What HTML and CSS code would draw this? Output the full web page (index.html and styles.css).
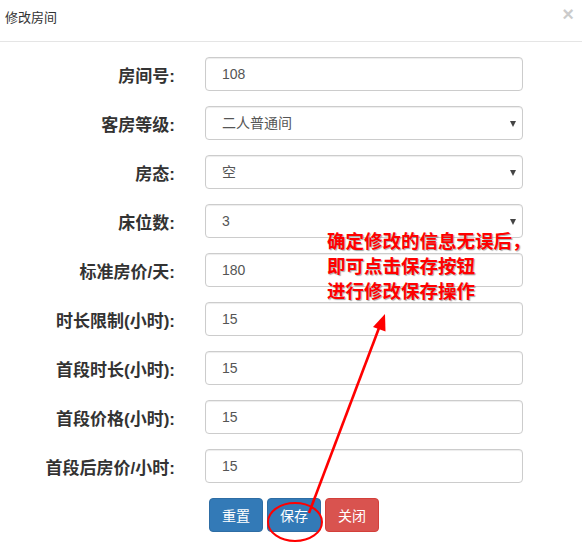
FILE: index.html
```html
<!DOCTYPE html>
<html lang="zh-CN">
<head>
    <meta charset="UTF-8">
    <title>修改房间</title>
    <link rel="stylesheet" href="styles.css">
</head>
<body>
    <div class="modal">
        <div class="modal-header">
            <h4 class="modal-title">修改房间</h4>
            <span class="close">&times;</span>
        </div>

        <form class="modal-body">
            <div class="form-row">
                <label>房间号:</label>
                <input type="text" class="form-control" value="108">
            </div>
            <div class="form-row">
                <label>客房等级:</label>
                <div class="select-wrap">
                    <select class="form-control"><option>二人普通间</option></select>
                </div>
            </div>
            <div class="form-row">
                <label>房态:</label>
                <div class="select-wrap">
                    <select class="form-control"><option>空</option></select>
                </div>
            </div>
            <div class="form-row">
                <label>床位数:</label>
                <div class="select-wrap">
                    <select class="form-control"><option>3</option></select>
                </div>
            </div>
            <div class="form-row">
                <label>标准房价/天:</label>
                <input type="text" class="form-control" value="180">
            </div>
            <div class="form-row">
                <label>时长限制(小时):</label>
                <input type="text" class="form-control" value="15">
            </div>
            <div class="form-row">
                <label>首段时长(小时):</label>
                <input type="text" class="form-control" value="15">
            </div>
            <div class="form-row">
                <label>首段价格(小时):</label>
                <input type="text" class="form-control" value="15">
            </div>
            <div class="form-row">
                <label>首段后房价/小时:</label>
                <input type="text" class="form-control" value="15">
            </div>

            <div class="actions">
                <button type="button" class="btn btn-primary">重置</button>
                <button type="button" class="btn btn-primary">保存</button>
                <button type="button" class="btn btn-danger">关闭</button>
            </div>
        </form>
    </div>

    <!-- Annotation overlay -->
    <div class="note">确定修改的信息无误后，<br>即可点击保存按钮<br>进行修改保存操作</div>
    <svg class="arrow" width="582" height="545" viewBox="0 0 582 545">
        <ellipse cx="295" cy="522" rx="27" ry="19" fill="none" stroke="#f00" stroke-width="2"/>
        <line x1="309" y1="513" x2="379" y2="328" stroke="#f00" stroke-width="2.6"/>
        <polygon points="385,314 385.5,331.5 373,327" fill="#f00"/>
    </svg>
</body>
</html>
```

FILE: styles.css
```css
/* Global styling */
* { box-sizing: border-box; margin: 0; padding: 0; }
body { font-family: "Liberation Sans", "Noto Sans CJK SC", sans-serif; font-size: 14px; color: #333; background: #fff; width: 582px; height: 545px; overflow: hidden; position: relative; }

/* Modal header */
.modal-header { height: 42px; padding: 0 8px 0 5px; border-bottom: 1px solid #e5e5e5; display: flex; align-items: center; justify-content: space-between; }
.modal-title { font-size: 13px; font-weight: normal; color: #333; margin-top: -9px; }
.close { font-size: 20px; font-weight: bold; color: #000; opacity: .2; margin-top: -14px; line-height: 1; }

/* Form rows */
.modal-body { padding-top: 15px; }
.form-row { display: flex; align-items: center; height: 34px; margin-bottom: 15px; }
.form-row label { width: 175px; text-align: right; font-size: 17px; font-weight: bold; margin-right: 30px; color: #333; }
.form-control {
    width: 318px; height: 34px; padding: 6px 16px;
    font-family: inherit; font-size: 14px; color: #555;
    background: #fff; border: 1px solid #ccc; border-radius: 4px;
    box-shadow: inset 0 1px 1px rgba(0, 0, 0, .075);
}
select.form-control { appearance: none; -webkit-appearance: none; padding-left: 16px; color: #555; }
.select-wrap { position: relative; }
.select-wrap::after {
    content: ""; position: absolute; right: 7px; top: 15px;
    border-left: 3.5px solid transparent; border-right: 3.5px solid transparent; border-top: 6px solid #444;
}

/* Buttons */
.actions { display: flex; gap: 4px; padding-left: 209px; margin-top: 10px; }
.btn { width: 54px; height: 34px; font-family: inherit; font-size: 14px; color: #fff; border: 1px solid transparent; border-radius: 4px; }
.btn-primary { background: #337ab7; border-color: #2e6da4; }
.btn-danger { background: #d9534f; border-color: #d43f3a; }

/* Annotation */
.note {
    position: absolute; left: 327px; top: 229px;
    font-size: 18.5px; line-height: 25px; font-weight: bold; color: #f00;
    text-shadow: 1px 1px 1px rgba(0, 0, 0, .35), 0 0 2px #fff;
}
.arrow { position: absolute; left: 0; top: 0; pointer-events: none; }
```
